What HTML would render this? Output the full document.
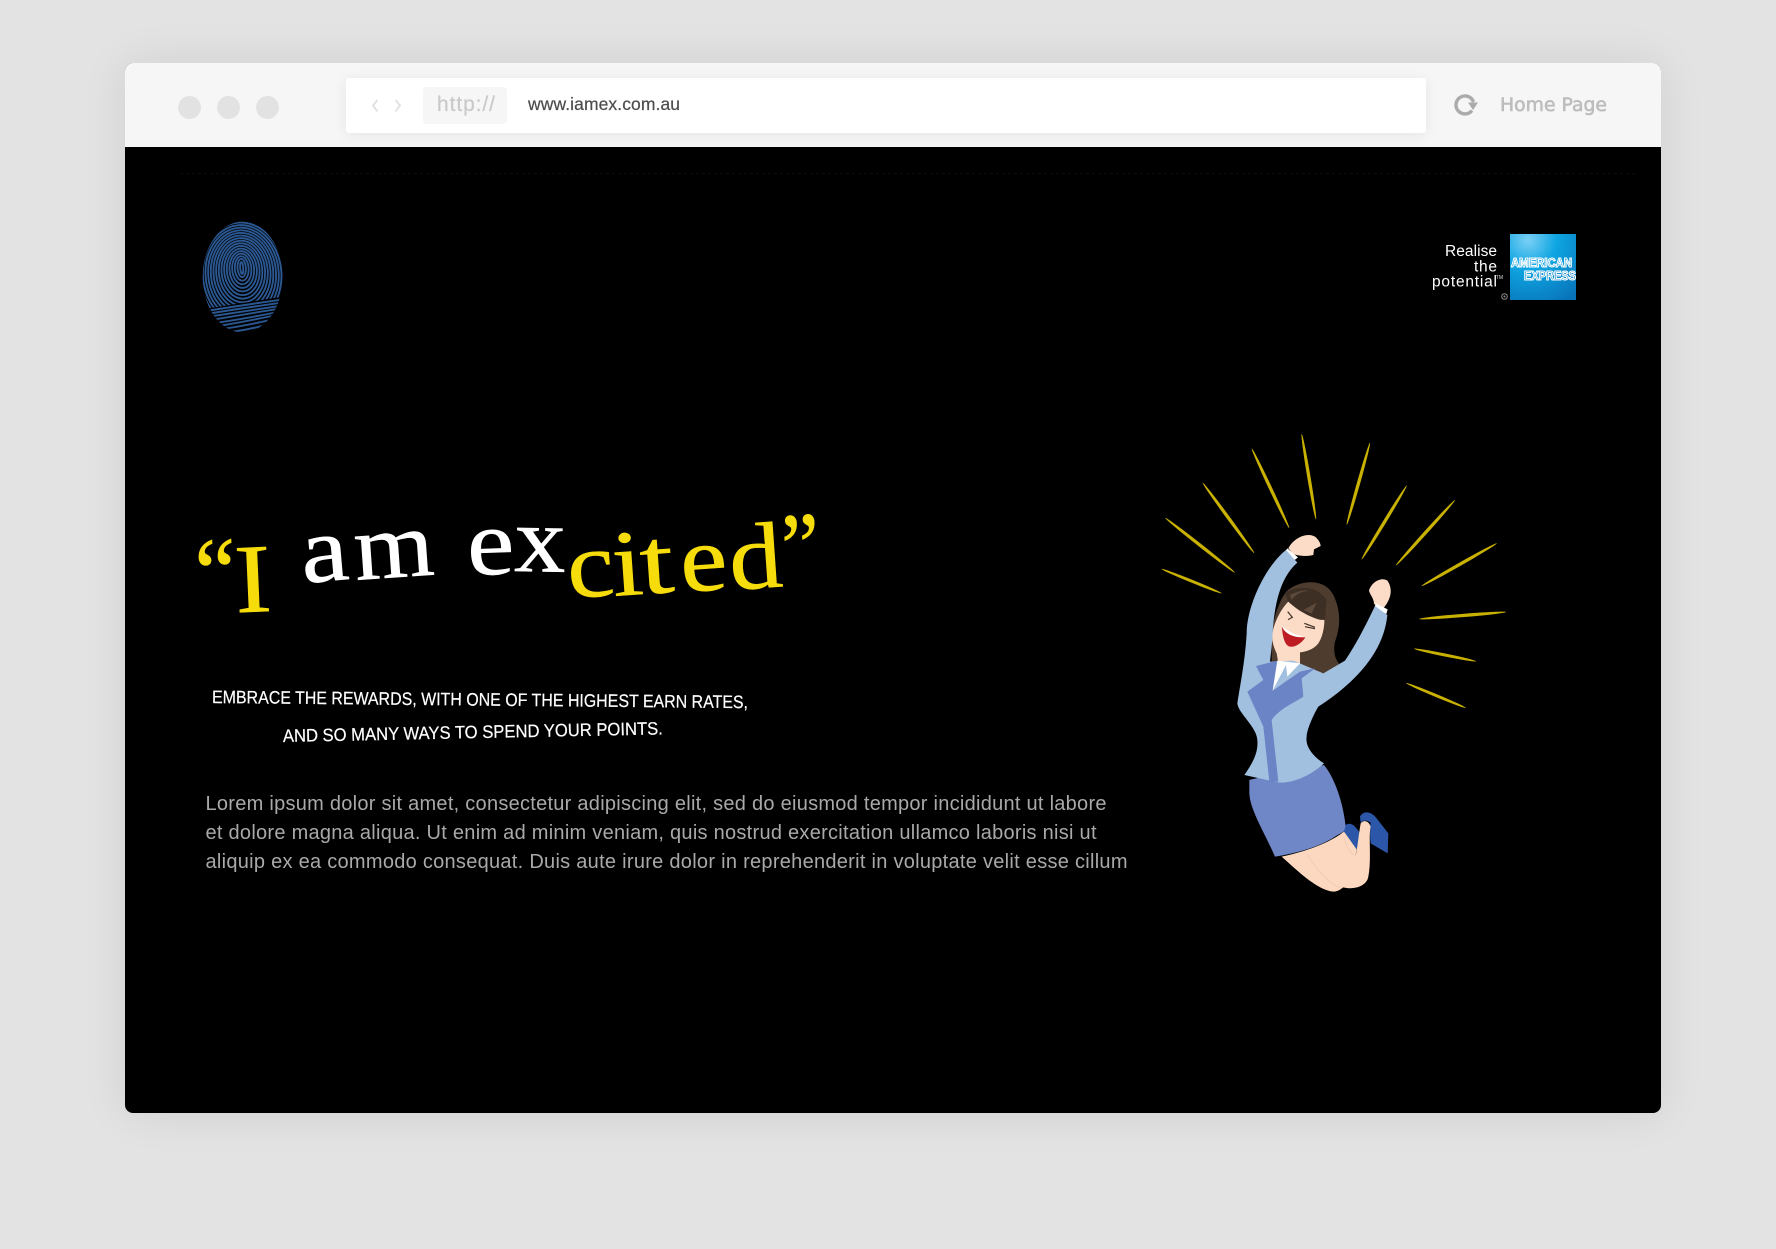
<!DOCTYPE html>
<html lang="en">
<head>
<meta charset="utf-8">
<title>www.iamex.com.au</title>
<style>
html,body{margin:0;padding:0;width:1776px;height:1249px;overflow:hidden;background:#e3e3e3;}
.win{position:absolute;left:125px;top:63px;width:1536px;height:1050px;border-radius:8px;background:#000;box-shadow:0 0 45px rgba(0,0,0,.09);overflow:hidden;}
.bar{position:absolute;left:0;top:0;width:100%;height:84px;background:#f6f6f6;}
.url{position:absolute;left:221px;top:15px;width:1080px;height:55px;background:#fff;border-radius:3px;box-shadow:0 2px 14px rgba(0,0,0,.07);}
.pill{position:absolute;left:77px;top:9px;width:84px;height:37px;background:#f6f6f6;border-radius:4px;}
.dot{position:absolute;top:33px;width:23px;height:23px;border-radius:50%;background:#e2e2e2;}
svg{position:absolute;left:0;top:0;}
</style>
</head>
<body>
<div class="win">
  <div class="bar">
    <div class="dot" style="left:53px"></div>
    <div class="dot" style="left:92px"></div>
    <div class="dot" style="left:131px"></div>
    <div class="url"><div class="pill"></div></div>
  </div>
</div>
<svg width="1776" height="1249" viewBox="0 0 1776 1249" xmlns="http://www.w3.org/2000/svg">
  <defs>
    <clipPath id="fp"><ellipse cx="242.7" cy="277" rx="40" ry="55.5"/></clipPath>
    <radialGradient id="amx" gradientUnits="userSpaceOnUse" cx="1528" cy="240" r="72">
      <stop offset="0" stop-color="#7bd0f5"/>
      <stop offset=".4" stop-color="#0ea5e2"/>
      <stop offset="1" stop-color="#0873b8"/>
    </radialGradient>
  </defs>

  <!-- chrome -->
  <path d="M377.500 100l-4.500 5.500 4.500 6" fill="none" stroke="#e0e0e0" stroke-width="1.800"/>
  <path d="M395.500 100l4.500 5.500-4.500 6" fill="none" stroke="#e0e0e0" stroke-width="1.800"/>
  <text x="437" y="111" font-family="'Liberation Sans',sans-serif" font-size="21" fill="#c9c9c9" stroke="#c9c9c9" stroke-width=".2" textLength="58">http://</text>
  <text x="528" y="110" font-family="'Liberation Sans',sans-serif" font-size="17.500" fill="#4c4c4c" stroke="#4c4c4c" stroke-width=".2" textLength="152">www.iamex.com.au</text>
  <path d="M1472 110.600A9 9 0 1 1 1473.500 102" fill="none" stroke="#ababab" stroke-width="3.400"/>
  <path d="M1468 102.500l10 0 -5 7.500z" fill="#ababab"/>
  <text x="1500" y="111" font-family="'DejaVu Sans',sans-serif" font-size="19" fill="#bdbdbd" stroke="#bdbdbd" stroke-width=".6" textLength="107" lengthAdjust="spacingAndGlyphs">Home Page</text>

  <!-- faint dotted guide -->
  <line x1="180" y1="173.500" x2="1637" y2="173.500" stroke="#0c0c0c" stroke-width="1" stroke-dasharray="3 3"/>

  <!-- fingerprint -->
  <g clip-path="url(#fp)" fill="none" stroke="#2b5892" stroke-width="1.900">
    <g transform="rotate(-4 241.700 268)">
      <ellipse cx="241.700" cy="268" rx="1.500" ry="6"/>
      <ellipse cx="241.700" cy="268" rx="4.200" ry="9.100"/>
      <ellipse cx="241.700" cy="268.500" rx="6.900" ry="12.200"/>
      <ellipse cx="241.700" cy="269" rx="9.600" ry="15.300"/>
      <ellipse cx="241.700" cy="269.500" rx="12.300" ry="18.400"/>
      <ellipse cx="241.700" cy="270" rx="15" ry="21.500"/>
      <ellipse cx="241.700" cy="270.500" rx="17.700" ry="24.600"/>
      <ellipse cx="241.700" cy="271" rx="20.400" ry="27.700"/>
      <ellipse cx="241.700" cy="271.500" rx="23.100" ry="30.800"/>
      <ellipse cx="241.700" cy="272" rx="25.800" ry="33.900"/>
      <ellipse cx="241.700" cy="272.500" rx="28.500" ry="37"/>
      <ellipse cx="241.700" cy="273" rx="31.200" ry="40.100"/>
      <ellipse cx="241.700" cy="273.500" rx="33.900" ry="43.200"/>
      <ellipse cx="241.700" cy="274" rx="36.600" ry="46.300"/>
      <ellipse cx="241.700" cy="274.500" rx="39.300" ry="49.400"/>
      <ellipse cx="241.700" cy="275" rx="42" ry="52.500"/>
      <ellipse cx="241.700" cy="275.500" rx="44.700" ry="55.600"/>
    </g>
    <path d="M198 310C225 306 260 300 288 296L288 340L198 340Z" fill="#000" stroke="none"/>
    <path d="M200 312q30 -5 86 -13M200 315q30 -5 86 -13M200 318q34 -5 86 -13M205 321q30 -5 78 -13M208 324q30 -4 70 -12M212 327q26 -4 60 -11M214 330q26 -3 56 -10M222 333q20 -2 40 -7" />
  </g>

  <!-- amex -->
  <g font-family="'Liberation Sans',sans-serif" fill="#fff" text-anchor="end" font-size="15.500">
    <text x="1497" y="256" textLength="52">Realise</text>
    <text x="1497" y="271.500" textLength="23">the</text>
    <text x="1497" y="286.500" textLength="65">potential</text>
    <text x="1503" y="279" font-size="5" fill="#ddd">TM</text>
  </g>
  <circle cx="1504.500" cy="296.500" r="2.800" fill="none" stroke="#888" stroke-width="1"/>
  <circle cx="1504.500" cy="296.500" r="1" fill="#888"/>
  <rect x="1510" y="234" width="66" height="66" fill="url(#amx)"/>
  <text x="1511" y="267" font-family="'Liberation Sans',sans-serif" font-size="12.500" font-weight="bold" fill="#159bd9" stroke="#fff" stroke-width="1.100" textLength="61" lengthAdjust="spacingAndGlyphs">AMERICAN</text>
  <text x="1524" y="280" font-family="'Liberation Sans',sans-serif" font-size="12.500" font-weight="bold" fill="#1284c8" stroke="#fff" stroke-width="1.100" textLength="52" lengthAdjust="spacingAndGlyphs">EXPRESS</text>

  <!-- headline -->
  <g font-family="'Liberation Serif',serif" font-size="94" fill="#f6dc0b" stroke="#f6dc0b" stroke-width=".6">
    <text transform="translate(197 606) rotate(-3) scale(.95 1)" font-size="98">“</text>
    <text transform="translate(236 612.500) rotate(-2.500) scale(1.120 1)" font-size="98">I</text>
    <text transform="translate(569 598) rotate(-4) scale(1.130 1)">c</text>
    <text transform="translate(614 596) rotate(-4) scale(1.180 1)">i</text>
    <text transform="translate(642 594) rotate(-4) scale(1.280 1)">t</text>
    <text transform="translate(682 592) rotate(-4) scale(1.130 1)">e</text>
    <text transform="translate(731 590) rotate(-4) scale(1.130 1)">d</text>
    <text transform="translate(784 580) rotate(-4) scale(.9 1)" font-size="96">”</text>
  </g>
  <g font-family="'Liberation Serif',serif" font-size="94" fill="#fff" stroke="#fff" stroke-width=".6">
    <text transform="translate(303 583) rotate(-5) scale(1.140 1)">a</text>
    <text transform="translate(356 580) rotate(-4) scale(1.090 1)">m</text>
    <text transform="translate(468 575) rotate(-2) scale(1.130 1)">e</text>
    <text transform="translate(514 571) rotate(1) scale(1.090 1)">x</text>
  </g>

  <!-- subhead -->
  <g font-family="'Liberation Sans',sans-serif" font-size="18" fill="#fff" stroke="#fff" stroke-width=".2">
    <text x="212" y="703" textLength="536" lengthAdjust="spacingAndGlyphs" transform="rotate(.55 212 703)">EMBRACE THE REWARDS, WITH ONE OF THE HIGHEST EARN RATES,</text>
    <text x="283" y="742" textLength="380" lengthAdjust="spacingAndGlyphs" transform="rotate(-1.150 283 742)">AND SO MANY WAYS TO SPEND YOUR POINTS.</text>
  </g>

  <!-- body -->
  <g font-family="'Liberation Sans',sans-serif" font-size="20" fill="#a9a9a9">
    <text x="205.500" y="810" textLength="901">Lorem ipsum dolor sit amet, consectetur adipiscing elit, sed do eiusmod tempor incididunt ut labore</text>
    <text x="205.500" y="839" textLength="891">et dolore magna aliqua. Ut enim ad minim veniam, quis nostrud exercitation ullamco laboris nisi ut</text>
    <text x="205.500" y="868" textLength="922">aliquip ex ea commodo consequat. Duis aute irure dolor in reprehenderit in voluptate velit esse cillum</text>
  </g>

  <!-- rays + woman, drawn in 3x coordinate space -->
  <g transform="translate(1150 420) scale(.33333)">
    <g fill="#c9b100">
      <ellipse cx="125" cy="483.500" rx="97" ry="4.500" transform="rotate(22.100 125 483.500)"/>
      <ellipse cx="150" cy="375.500" rx="133" ry="5" transform="rotate(38.200 150 375.500)"/>
      <ellipse cx="235.500" cy="294" rx="131" ry="5" transform="rotate(53.800 235.500 294)"/>
      <ellipse cx="361.500" cy="205" rx="132" ry="5" transform="rotate(64.800 361.500 205)"/>
      <ellipse cx="476.500" cy="170" rx="130" ry="5" transform="rotate(80.500 476.500 170)"/>
      <ellipse cx="625" cy="191.500" rx="128" ry="5" transform="rotate(105.800 625 191.500)"/>
      <ellipse cx="702.500" cy="307.500" rx="130" ry="5" transform="rotate(121.400 702.500 307.500)"/>
      <ellipse cx="826.500" cy="338" rx="132" ry="5" transform="rotate(132.100 826.500 338)"/>
      <ellipse cx="927.500" cy="434" rx="130" ry="5" transform="rotate(150.400 927.500 434)"/>
      <ellipse cx="938" cy="586.500" rx="131" ry="5" transform="rotate(175.400 938 586.500)"/>
      <ellipse cx="885" cy="705" rx="95" ry="4.500" transform="rotate(11.500 885 705)"/>
      <ellipse cx="858" cy="826.500" rx="97" ry="4.500" transform="rotate(22.600 858 826.500)"/>
    </g>

    <!-- hair back -->
    <path d="M405 520C430 485 520 465 550 525C575 575 570 625 555 665C548 700 555 735 600 755L520 760L440 740L365 725L365 640C372 590 385 550 405 520Z" fill="#4e3c2e"/>
    <!-- face + neck -->
    <path d="M367 640C375 600 395 565 415 545C450 570 490 598 515 600L523 585C525 620 518 650 505 670C490 690 465 695 450 697L450 735L385 730L380 700C370 680 365 660 367 640Z" fill="#fcdcc6"/>
    <!-- bangs -->
    <path d="M405 520C440 495 500 495 530 540L525 600C490 600 440 570 415 545Z" fill="#3e2f25"/>
    <path d="M420 525C445 512 465 510 478 512C450 515 435 525 425 540Z" fill="#5d4a3b"/>
    <path d="M460 570L500 548L485 580Z" fill="#5d4a3b"/>
    <!-- mouth -->
    <path d="M396 620C420 640 445 650 466 652C455 670 435 682 420 680C405 678 397 650 396 620Z" fill="#bd1c22"/>
    <path d="M396 619C420 638 445 648 466 651C440 655 405 645 396 619Z" fill="#fff"/>
    <path d="M413 575l14 17-13 7M463 610l32 12M465 620l30 6" fill="none" stroke="#3e2f25" stroke-width="3.500"/>

    <!-- right (screen) fist and cuff -->
    <path d="M657 512C665 485 695 470 712 482C725 500 730 530 700 565L672 552C672 535 660 525 657 512Z" fill="#fcdcc6"/>
    <path d="M677 550L713 568L709 582L673 565Z" fill="#fff"/>
    <!-- left fist and cuff -->
    <path d="M415 385C430 355 470 335 495 350C505 358 512 370 512 378L492 388L490 405C470 410 445 408 430 402Z" fill="#fcdcc6"/>
    <path d="M412 385L444 412L434 420L404 396Z" fill="#fff"/>

    <!-- skirt -->
    <path d="M298 1080C310 1075 460 1050 522 1035C555 1075 580 1150 587 1220C590 1235 570 1240 555 1250C510 1280 440 1300 375 1310C345 1240 300 1170 298 1120Z" fill="#6f86c7"/>

    <!-- shoes -->
    <path d="M630 1190C640 1170 665 1175 680 1195L715 1240L713 1300L662 1270C660 1250 660 1220 662 1208C650 1200 640 1200 632 1208Z" fill="#2c57a8"/>
    <path d="M587 1215C600 1205 615 1215 630 1240L622 1290C605 1270 590 1250 582 1235Z" fill="#2c57a8"/>

    <!-- legs -->
    <path d="M395 1310C440 1350 500 1410 550 1415C565 1415 575 1405 580 1402C610 1410 650 1400 655 1370C665 1320 655 1250 662 1220C655 1200 640 1200 632 1210C625 1250 622 1290 616 1310L620 1288L582 1235C550 1260 490 1290 395 1310Z" fill="#fdd8c0"/>
    <path d="M470 1300C500 1350 530 1385 572 1405" fill="none" stroke="#f2c9b0" stroke-width="2.500"/>
    <path d="M582 1250C585 1275 600 1295 612 1306" fill="none" stroke="#f2c9b0" stroke-width="2.500"/>

    <!-- jacket incl. arms -->
    <path d="M408 390L442 428C400 465 372 530 367 660L360 725L430 722L520 760L585 722C620 670 645 620 675 558L712 585C705 660 660 760 505 860C490 885 470 930 470 950C465 980 490 1010 522 1030C490 1060 440 1088 388 1088L283 1065C315 1020 325 990 322 960C320 920 265 880 262 850C275 770 285 720 290 640C290 560 345 440 408 390Z" fill="#a1bfdf"/>
    <!-- lapel + panel -->
    <path d="M318 738L382 722L368 812L450 755L495 745L455 775L460 830C430 850 390 865 365 900L385 1085L358 1085L340 920L292 815L340 780Z" fill="#6b84c6"/>
    <!-- shirt -->
    <path d="M382 722L450 730L412 770L368 812Z" fill="#fff"/>
    <path d="M408 735L368 812L412 770Z" fill="#a1bfdf"/>
  </g>
</svg>
</body>
</html>
